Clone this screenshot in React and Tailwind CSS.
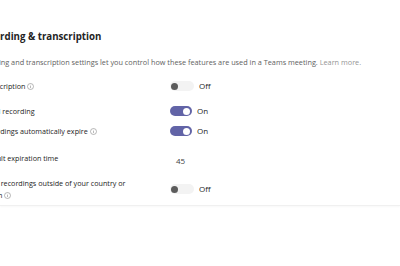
import React from 'react'

function Info() {
  return (
    <svg width="7" height="7" viewBox="0 0 14 14" className="ml-[2px] inline-block align-[-1px]">
      <circle cx="7" cy="7" r="6" fill="none" stroke="#8a8a8a" strokeWidth="1.2" />
      <rect x="6.4" y="6" width="1.2" height="4.2" fill="#8a8a8a" />
      <circle cx="7" cy="4.2" r="0.8" fill="#8a8a8a" />
    </svg>
  )
}

function Toggle({ on }) {
  return (
    <div className="flex items-center gap-[5px]">
      {on ? (
        <div className="w-[22px] h-[10px] rounded-full bg-[#6264a7] flex items-center justify-end pr-[2px]">
          <div className="w-[7px] h-[7px] rounded-full bg-white" />
        </div>
      ) : (
        <div className="w-[24px] h-[10px] rounded-full bg-[#f3f3f3] flex items-center pl-[1px]">
          <div className="w-[7px] h-[7px] rounded-full bg-[#5c5c5c]" />
        </div>
      )}
      <span className="text-[8px] text-[#242424]">{on ? 'On' : 'Off'}</span>
    </div>
  )
}

const rows = [
  { label: 'Transcription', info: true, ctl: <Toggle on={false} />, mt: 'mt-0' },
  { label: 'Cloud recording', ctl: <Toggle on />, mt: 'mt-[5px]' },
  { label: 'Recordings automatically expire', info: true, ctl: <Toggle on />, mt: 'mt-0' },
  { label: 'Default expiration time', ctl: <span className="pl-[6px] text-[8px] text-[#424242]">45</span>, mt: 'mt-[5px]' },
]

export default function App() {
  return (
    <div className="w-[400px] h-[266px] bg-white overflow-hidden" style={{ fontFamily: '"Open Sans", "Noto Sans", sans-serif' }}>
      <div className="h-[206px] border-b border-[#f0f0f0] shadow-[0_1px_2px_rgba(0,0,0,0.03)]">
        <div className="pt-[29px]">
          <h2 className="ml-[-23px] text-[9.7px] leading-[16px] font-bold text-[#242424]">Recording &amp; transcription</h2>
          <p className="ml-[-25px] mt-[11px] text-[7.3px] leading-[12px] text-[#616161] whitespace-nowrap">
            Recording and transcription settings let you control how these features are used in a Teams meeting.{' '}
            <span className="text-[#959595]">Learn more.</span>
          </p>
          <div className="ml-[-19px] mt-[8px]">
            {rows.map((r) => (
              <div key={r.label} className={`grid grid-cols-[189px_1fr] items-center h-[20px] ${r.mt}`}>
                <div className="text-[7.2px] text-[#242424] whitespace-nowrap">
                  {r.label}
                  {r.info && <Info />}
                </div>
                <div>{r.ctl}</div>
              </div>
            ))}
            <div className="grid grid-cols-[189px_1fr] items-center h-[26px] mt-[10px]">
              <div className="text-[7.2px] leading-[12px] text-[#242424] w-[152px]">
                Store recordings outside of your country or region
                <Info />
              </div>
              <div>
                <Toggle on={false} />
              </div>
            </div>
          </div>
        </div>
      </div>
    </div>
  )
}
